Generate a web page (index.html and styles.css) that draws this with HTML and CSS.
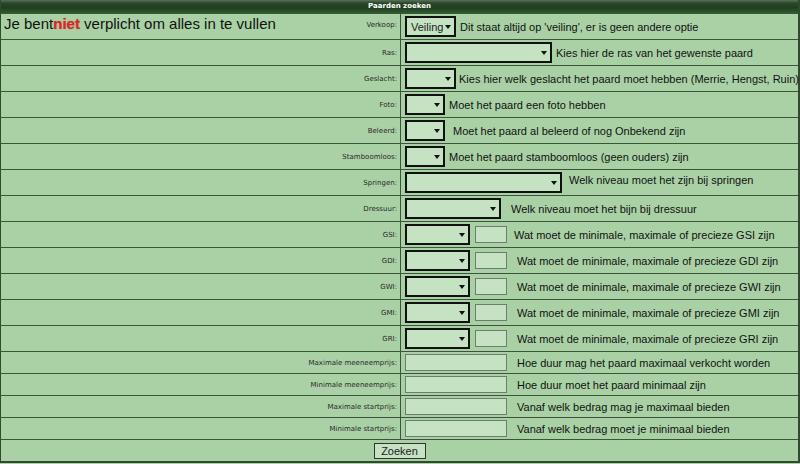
FILE: index.html
```html
<!DOCTYPE html>
<html lang="nl">

<head>
    <meta charset="UTF-8">
    <title>Paarden zoeken</title>
    <link rel="stylesheet" href="styles.css">
</head>

<body>
    <form class="zoek-form">
        <table class="zoek">
            <colgroup>
                <col class="col-label">
                <col class="col-veld">
            </colgroup>
            <tr>
                <th colspan="2" class="titel">Paarden zoeken</th>
            </tr>
            <tr class="rij">
                <td class="label"><span class="melding">Je bent<b>niet</b> verplicht om alles in te vullen</span>Verkoop:</td>
                <td class="veld"><span class="keuze w52"><select><option>Veiling</option></select></span><span class="uitleg">Dit staat altijd op 'veiling', er is geen andere optie</span></td>
            </tr>
            <tr class="rij">
                <td class="label">Ras:</td>
                <td class="veld"><span class="keuze w148"><select><option></option></select></span><span class="uitleg">Kies hier de ras van het gewenste paard</span></td>
            </tr>
            <tr class="rij">
                <td class="label">Geslacht:</td>
                <td class="veld"><span class="keuze w52"><select><option></option></select></span><span class="uitleg tight">Kies hier welk geslacht het paard moet hebben (Merrie, Hengst, Ruin)</span></td>
            </tr>
            <tr class="rij">
                <td class="label">Foto:</td>
                <td class="veld"><span class="keuze w40"><select><option></option></select></span><span class="uitleg">Moet het paard een foto hebben</span></td>
            </tr>
            <tr class="rij">
                <td class="label">Beleerd:</td>
                <td class="veld"><span class="keuze w40"><select><option></option></select></span><span class="uitleg ruim">Moet het paard al beleerd of nog Onbekend zijn</span></td>
            </tr>
            <tr class="rij">
                <td class="label">Stamboomloos:</td>
                <td class="veld"><span class="keuze w40"><select><option></option></select></span><span class="uitleg">Moet het paard stamboomloos (geen ouders) zijn</span></td>
            </tr>
            <tr class="rij">
                <td class="label">Springen:</td>
                <td class="veld"><span class="keuze w158"><select><option></option></select></span><span class="uitleg midden hoog">Welk niveau moet het zijn bij springen</span></td>
            </tr>
            <tr class="rij">
                <td class="label">Dressuur:</td>
                <td class="veld"><span class="keuze w96"><select><option></option></select></span><span class="uitleg ver">Welk niveau moet het bijn bij dressuur</span></td>
            </tr>
            <tr class="rij">
                <td class="label">GSI:</td>
                <td class="veld"><span class="keuze w65"><select><option></option></select></span><input type="text" class="klein"><span class="uitleg midden">Wat moet de minimale, maximale of precieze GSI zijn</span></td>
            </tr>
            <tr class="rij">
                <td class="label">GDI:</td>
                <td class="veld"><span class="keuze w65"><select><option></option></select></span><input type="text" class="klein"><span class="uitleg ver">Wat moet de minimale, maximale of precieze GDI zijn</span></td>
            </tr>
            <tr class="rij">
                <td class="label">GWI:</td>
                <td class="veld"><span class="keuze w65"><select><option></option></select></span><input type="text" class="klein"><span class="uitleg ver">Wat moet de minimale, maximale of precieze GWI zijn</span></td>
            </tr>
            <tr class="rij">
                <td class="label">GMI:</td>
                <td class="veld"><span class="keuze w65"><select><option></option></select></span><input type="text" class="klein"><span class="uitleg ver">Wat moet de minimale, maximale of precieze GMI zijn</span></td>
            </tr>
            <tr class="rij">
                <td class="label">GRI:</td>
                <td class="veld"><span class="keuze w65"><select><option></option></select></span><input type="text" class="klein"><span class="uitleg ver">Wat moet de minimale, maximale of precieze GRI zijn</span></td>
            </tr>
            <tr class="rij laag">
                <td class="label">Maximale meeneemprijs:</td>
                <td class="veld"><input type="text" class="prijs"><span class="uitleg ver">Hoe duur mag het paard maximaal verkocht worden</span></td>
            </tr>
            <tr class="rij laag">
                <td class="label">Minimale meeneemprijs:</td>
                <td class="veld"><input type="text" class="prijs"><span class="uitleg ver">Hoe duur moet het paard minimaal zijn</span></td>
            </tr>
            <tr class="rij laag">
                <td class="label">Maximale startprijs:</td>
                <td class="veld"><input type="text" class="prijs"><span class="uitleg ver">Vanaf welk bedrag mag je maximaal bieden</span></td>
            </tr>
            <tr class="rij laag">
                <td class="label">Minimale startprijs:</td>
                <td class="veld"><input type="text" class="prijs"><span class="uitleg ver">Vanaf welk bedrag moet je minimaal bieden</span></td>
            </tr>
            <tr class="rij laag">
                <td colspan="2" class="knop-cel"><button type="button" class="knop">Zoeken</button></td>
            </tr>
        </table>
    </form>
</body>

</html>
```

FILE: styles.css
```css
* {
    margin: 0;
    padding: 0;
    box-sizing: border-box;
}

body {
    background: #a9d1a5;
    font-family: "Liberation Sans", Arial, sans-serif;
    color: #111;
}

.zoek {
    width: 800px;
    table-layout: fixed;
    border-collapse: collapse;
    background: #a9d1a5;
    border-left: 1px solid #2f4a2f;
    border-right: 2px solid #2f4a2f;
    border-bottom: 2px solid #2f4a2f;
}

.col-label {
    width: 400px;
}

.titel {
    height: 13px;
    background: linear-gradient(#5c6f5c 0, #284628 25%, #1f3f1f 60%, #2f5a2f 100%);
    color: #fff;
    font-family: "DejaVu Sans", Verdana, sans-serif;
    font-size: 7px;
    font-weight: bold;
    text-align: center;
    vertical-align: middle;
    line-height: 13px;
}

.rij td {
    height: 26px;
    border-top: 1px solid #3a553a;
    vertical-align: middle;
}

.rij.laag td {
    height: 22px;
}

.label {
    text-align: right;
    padding-right: 3px;
    border-right: 1px solid #3a553a;
    font-family: "DejaVu Sans", Verdana, sans-serif;
    font-size: 7px;
    color: #2a2a2a;
    white-space: nowrap;
}

.melding {
    float: left;
    padding-left: 3px;
    font-family: "Liberation Sans", Arial, sans-serif;
    font-size: 15px;
    color: #111;
    margin-top: -6px;
}

.melding b {
    color: #d42a2a;
    text-shadow: 0 0 1px #e05050;
}

.veld {
    padding-left: 4px;
    white-space: nowrap;
    font-size: 0;
}

.keuze {
    position: relative;
    display: inline-block;
    vertical-align: middle;
    height: 21px;
}

.keuze select {
    appearance: none;
    -webkit-appearance: none;
    width: 100%;
    height: 21px;
    border: 2px solid #111;
    background: #c5e2c3;
    font-family: "Liberation Sans", Arial, sans-serif;
    font-size: 11px;
    color: #222;
    padding-left: 4px;
    border-radius: 0;
}

.keuze::after {
    content: "";
    position: absolute;
    right: 5px;
    top: 9px;
    border-left: 3px solid transparent;
    border-right: 3px solid transparent;
    border-top: 4px solid #111;
}

.w40 { width: 40px; }
.w52 { width: 51px; }
.w65 { width: 65px; }
.w96 { width: 96px; }
.w148 { width: 147px; }
.w158 { width: 157px; }

.klein {
    display: inline-block;
    vertical-align: middle;
    width: 32px;
    height: 17px;
    margin-left: 5px;
    border: 1px solid #6d7d6d;
    background: #c5e2c3;
}

.prijs {
    display: inline-block;
    vertical-align: middle;
    width: 102px;
    height: 17px;
    border: 1px solid #6d7d6d;
    background: #c5e2c3;
}

.uitleg {
    display: inline-block;
    vertical-align: middle;
    font-size: 11px;
    margin-left: 4px;
    color: #111;
}

.uitleg.tight {
    margin-left: 3px;
}

.uitleg.ruim {
    margin-left: 8px;
}

.uitleg.midden {
    margin-left: 7px;
}

.uitleg.ver {
    margin-left: 10px;
}

.uitleg.hoog {
    margin-top: -6px;
}

.knop-cel {
    text-align: center;
}

.knop {
    width: 52px;
    height: 16px;
    border: 1px solid #333;
    background: #c5e2c3;
    font-family: "Liberation Sans", Arial, sans-serif;
    font-size: 11px;
    color: #222;
    vertical-align: middle;
}
```
